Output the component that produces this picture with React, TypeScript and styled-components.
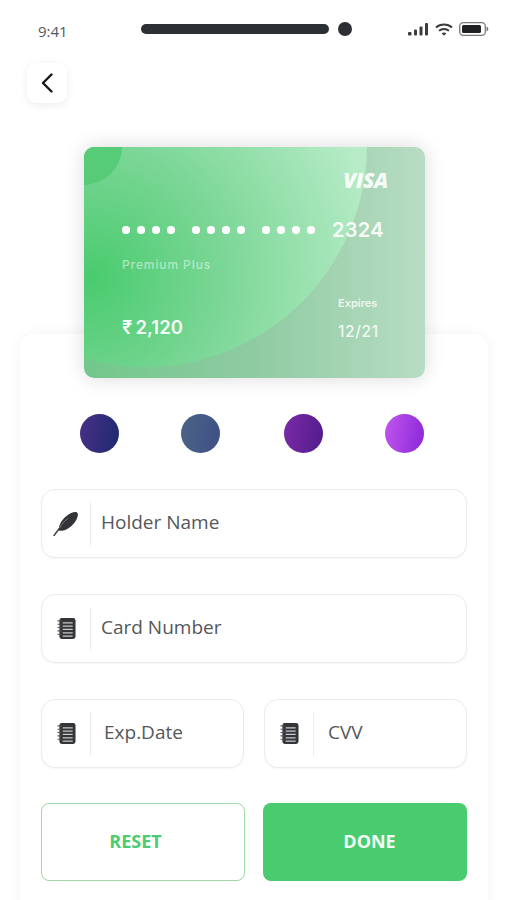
import React from "react";
import styled, { createGlobalStyle } from "styled-components";

const Global = createGlobalStyle`
  html, body { margin: 0; padding: 0; background: #fff; }
  body { font-family: "Open Sans", sans-serif; }
`;

const Screen = styled.div`
  width: 507px;
  height: 900px;
  overflow: hidden;
  background: #fff;
`;

const StatusBar = styled.div`
  height: 63px;
  box-sizing: border-box;
  padding: 24px 18px 0 38px;
  display: flex;
  align-items: flex-start;
`;

const Time = styled.span`
  width: 104px;
  font: 500 15px/15px "Open Sans", sans-serif;
  color: #55585b;
`;

const Pill = styled.div`
  width: 189px;
  height: 10px;
  margin-left: 0.5px;
  border-radius: 5px;
  background: #2c2f33;
`;

const Camera = styled.div`
  width: 14px;
  height: 14px;
  margin: -2px 0 0 9.5px;
  border-radius: 50%;
  background: #2c2f33;
`;

const StatusIcons = styled.div`
  margin-left: 56px;
  margin-top: -2px;
  display: flex;
  align-items: center;
  gap: 6px;
  height: 14px;
`;

const BackButton = styled.button`
  display: flex;
  align-items: center;
  justify-content: center;
  width: 40px;
  height: 40px;
  margin-left: 27px;
  padding: 0;
  border: 0;
  border-radius: 9px;
  background: #fff;
  box-shadow: 0 2px 8px rgba(0, 0, 0, 0.08);
`;

const Card = styled.div`
  position: relative;
  z-index: 1;
  box-sizing: border-box;
  width: 341px;
  height: 231px;
  margin: 44px 0 0 84px;
  padding: 22px 37px 0 38px;
  display: flex;
  flex-direction: column;
  overflow: hidden;
  border-radius: 10px;
  background: linear-gradient(90deg, #72c78b 0%, #8fcba2 50%, #b8dcc3 100%);
  box-shadow: 0 0 20px rgba(0, 0, 0, 0.15);
  color: #fff;
  font-family: Inter, sans-serif;
`;

const BigCircle = styled.div`
  position: absolute;
  left: -161px;
  top: -224px;
  width: 444px;
  height: 444px;
  border-radius: 50%;
  background: radial-gradient(circle at 167px 355px, #49cb6e 0, #7ad695 130px, #b8ecc8 295px);
`;

const SmallCircle = styled.div`
  position: absolute;
  left: -38px;
  top: -38px;
  width: 76px;
  height: 76px;
  border-radius: 50%;
  background: #56cb78;
`;

const Content = styled.div`
  position: relative;
  display: flex;
  flex-direction: column;
  flex: 1;
`;

const Visa = styled.div`
  align-self: flex-end;
  font: italic 800 21px/22px "Open Sans", sans-serif;
  letter-spacing: -0.3px;
  color: rgba(255, 255, 255, 0.92);
`;

const NumberRow = styled.div`
  margin-top: 28px;
  display: flex;
  align-items: center;
  height: 22px;
`;

const DotGroup = styled.div`
  display: flex;
  gap: 7.5px;
  margin-right: 17.5px;
`;

const Dot = styled.span`
  width: 7.5px;
  height: 7.5px;
  border-radius: 50%;
  background: #fff;
`;

const LastDigits = styled.span`
  font: 600 20px/22px Inter, sans-serif;
  letter-spacing: 0.3px;
  color: rgba(255, 255, 255, 0.93);
`;

const Tier = styled.div`
  margin-top: 16px;
  font: 500 12px/15px Inter, sans-serif;
  letter-spacing: 0.9px;
  color: rgba(255, 255, 255, 0.5);
`;

const BottomRow = styled.div`
  margin-top: 24px;
  display: flex;
  justify-content: space-between;
  align-items: flex-end;
`;

const Amount = styled.div`
  margin-bottom: 2px;
  font: 600 18.5px/22px Inter, sans-serif;
  word-spacing: -1.5px;
  color: rgba(255, 255, 255, 0.95);
`;

const ExpiryBlock = styled.div`
  width: 50px;
  display: flex;
  flex-direction: column;
  gap: 14px;
`;

const ExpiryLabel = styled.div`
  font: 600 11px/14px Inter, sans-serif;
  color: rgba(255, 255, 255, 0.82);
`;

const ExpiryValue = styled.div`
  font: 500 15.5px/16px Inter, sans-serif;
  letter-spacing: 0.6px;
  color: rgba(255, 255, 255, 0.85);
`;

const Panel = styled.div`
  position: relative;
  box-sizing: border-box;
  width: 468px;
  height: 600px;
  margin: -44px 0 0 20px;
  padding: 80px 21px 0;
  border-radius: 14px 14px 0 0;
  background: #fff;
  box-shadow: 0 0 14px rgba(0, 0, 0, 0.05);
`;

const Swatches = styled.div`
  display: flex;
  height: 39px;
  padding-left: 39px;
`;

const Swatch = styled.div<{ $from: string; $to: string; $gap: number }>`
  flex: none;
  width: 39px;
  height: 39px;
  margin-right: ${(p) => p.$gap}px;
  border-radius: 50%;
  background: linear-gradient(100deg, ${(p) => p.$from}, ${(p) => p.$to});
`;

const Fields = styled.div`
  margin-top: 36px;
  display: flex;
  flex-direction: column;
  gap: 36px;
`;

const SplitRow = styled.div`
  display: flex;
  gap: 20px;
`;

const Field = styled.div`
  flex: 1 0 auto;
  box-sizing: border-box;
  height: 69px;
  display: flex;
  align-items: center;
  border: 1px solid #e9ebee;
  border-radius: 14px;
  background: #fff;
  box-shadow: 0 1px 2px rgba(0, 0, 0, 0.04);
`;

const SplitField = styled(Field)`
  flex: 1 1 0;
`;

const IconSlot = styled.div`
  width: 48px;
  height: 44px;
  flex: none;
  display: flex;
  align-items: center;
  justify-content: center;
  border-right: 1.5px solid #eeeeee;
`;

const Label = styled.span<{ $indent: number }>`
  margin: 0 0 3px ${(p) => p.$indent}px;
  font: 400 19px/24px "Open Sans", sans-serif;
  color: #55575a;
`;

const Buttons = styled.div`
  margin-top: 35px;
  display: flex;
  gap: 18px;
`;

const ActionButton = styled.button<{ $filled?: boolean }>`
  flex: none;
  width: 204px;
  height: 78px;
  padding: ${(p) => (p.$filled ? "0 0 2px 9px" : "0 15px 2px 0")};
  border-radius: 8px;
  border: ${(p) => (p.$filled ? "0" : "1px solid #9dd8a6")};
  background: ${(p) => (p.$filled ? "#49cc6f" : "#fff")};
  color: ${(p) => (p.$filled ? "#f2fbf4" : "#4ccb72")};
  font: 700 18px/24px "Open Sans", sans-serif;
`;

const Notebook = () => (
  <svg width="19" height="23" viewBox="0 0 20 24" aria-hidden="true">
    <rect x="2.5" y="1" width="17" height="22" rx="2.5" fill="#333538" />
    <path d="M6 6h10.5M6 9.5h10.5M6 13h10.5M6 16.5h10.5M6 20h10.5" stroke="#c9cacb" strokeWidth="1.3" />
    <path d="M0.5 4h4M0.5 7.5h4M0.5 11h4M0.5 14.5h4M0.5 18h4" stroke="#55575a" strokeWidth="1.2" />
  </svg>
);

const Quill = () => (
  <svg width="26" height="25" viewBox="0 0 26 25" aria-hidden="true">
    <path d="M1 24.5 7.5 16" stroke="#45474a" strokeWidth="1.5" strokeLinecap="round" fill="none" />
    <path d="M6 19.5C5.5 14 8.5 9 13.5 5 17 2.2 20.5 0.6 23 1c1.6.3 2.2 1.8 1.8 3.7-.7 3.4-3 7.5-6.6 10.6C14.5 18.6 10 20.5 6 19.5Z" fill="#323437" />
    <path d="M6.8 17C8 13.5 11 10.5 15 7.5" stroke="#77797c" strokeWidth="1" fill="none" />
  </svg>
);

const Dots = ({ n }: { n: number }) => (
  <DotGroup>
    {Array.from({ length: n }, (_, i) => (
      <Dot key={i} />
    ))}
  </DotGroup>
);

export default function App() {
  return (
    <Screen>
      <Global />
      <StatusBar>
        <Time>9:41</Time>
        <Pill />
        <Camera />
        <StatusIcons>
          <svg width="21" height="13" viewBox="0 0 21 13" aria-hidden="true">
            <rect x="0" y="9" width="3.5" height="3.5" rx="1" fill="#3a3c3f" />
            <rect x="6" y="6.5" width="3" height="6" rx="1" fill="#3a3c3f" />
            <rect x="11.5" y="3.5" width="3" height="9" rx="1" fill="#3a3c3f" />
            <rect x="17" y="0" width="3" height="12.5" rx="1" fill="#3a3c3f" />
          </svg>
          <svg width="18" height="13" viewBox="0 0 18 13" aria-hidden="true" fill="none" stroke="#3a3c3f" strokeWidth="2">
            <path d="M1 4.5C5.5 0.5 12.5 0.5 17 4.5" />
            <path d="M4 7.7C6.8 5.3 11.2 5.3 14 7.7" />
            <path d="M6.6 10.2c1.4-1 3.4-1 4.8 0L9 12.8z" fill="#3a3c3f" stroke="none" />
          </svg>
          <svg width="30" height="14" viewBox="0 0 30 14" aria-hidden="true">
            <rect x="0.7" y="0.7" width="25.6" height="12.6" rx="3.5" fill="none" stroke="#77797b" strokeWidth="1.3" />
            <rect x="3" y="3" width="19" height="8" rx="1.5" fill="#1f2124" />
            <path d="M27.5 4.5c1.3.4 1.8 1.3 1.8 2.5s-.5 2.1-1.8 2.5z" fill="#77797b" />
          </svg>
        </StatusIcons>
      </StatusBar>
      <BackButton aria-label="Back">
        <svg width="12" height="20" viewBox="0 0 12 20" aria-hidden="true" fill="none" stroke="#151618" strokeWidth="2.4" strokeLinecap="round" strokeLinejoin="round">
          <path d="M10.5 1.5 2 10l8.5 8.5" />
        </svg>
      </BackButton>
      <Card>
        <BigCircle />
        <SmallCircle />
        <Content>
          <Visa>VISA</Visa>
          <NumberRow>
            <Dots n={4} />
            <Dots n={4} />
            <Dots n={4} />
            <LastDigits>2324</LastDigits>
          </NumberRow>
          <Tier>Premium Plus</Tier>
          <BottomRow>
            <Amount>₹ 2,120</Amount>
            <ExpiryBlock>
              <ExpiryLabel>Expires</ExpiryLabel>
              <ExpiryValue>12/21</ExpiryValue>
            </ExpiryBlock>
          </BottomRow>
        </Content>
      </Card>
      <Panel>
        <Swatches>
          <Swatch $from="#4a2f86" $to="#1c2a70" $gap={62} />
          <Swatch $from="#4c6486" $to="#3e4f86" $gap={64} />
          <Swatch $from="#7d2aa8" $to="#4f1d8a" $gap={62} />
          <Swatch $from="#c257ee" $to="#8a26d8" $gap={0} />
        </Swatches>
        <Fields>
          <Field>
            <IconSlot>
              <Quill />
            </IconSlot>
            <Label $indent={10}>Holder Name</Label>
          </Field>
          <Field>
            <IconSlot>
              <Notebook />
            </IconSlot>
            <Label $indent={10}>Card Number</Label>
          </Field>
          <SplitRow>
            <SplitField>
              <IconSlot>
                <Notebook />
              </IconSlot>
              <Label $indent={13}>Exp.Date</Label>
            </SplitField>
            <SplitField>
              <IconSlot>
                <Notebook />
              </IconSlot>
              <Label $indent={14}>CVV</Label>
            </SplitField>
          </SplitRow>
        </Fields>
        <Buttons>
          <ActionButton>RESET</ActionButton>
          <ActionButton $filled>DONE</ActionButton>
        </Buttons>
      </Panel>
    </Screen>
  );
}
